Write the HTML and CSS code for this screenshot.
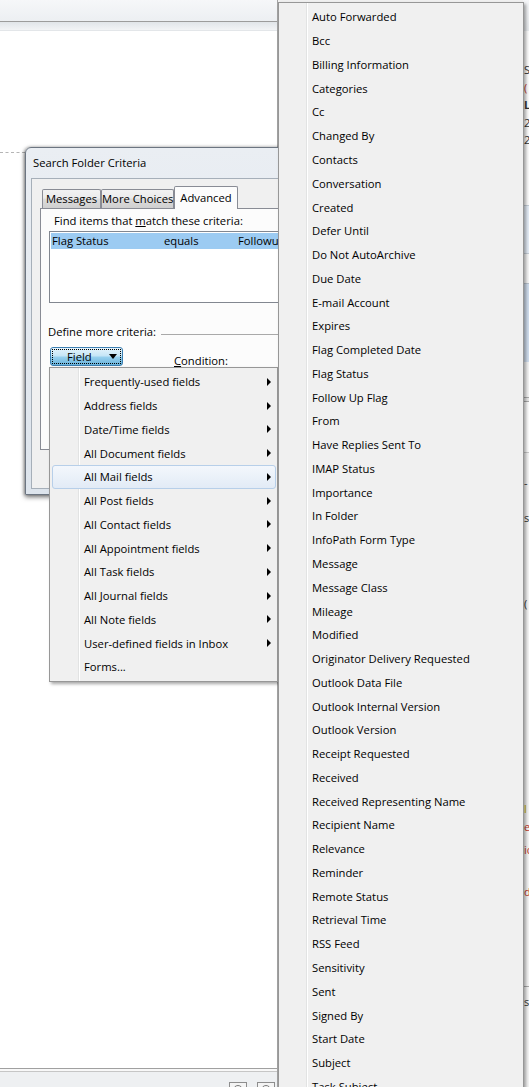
FILE: index.html
```html
<!DOCTYPE html>
<html>
<head>
<meta charset="utf-8">
<title>Search Folder Criteria</title>
<link rel="stylesheet" href="styles.css">
</head>
<body>
<div class="screen">
  <div class="app">
    <div class="toolbar"></div>
    <div class="strip"></div>
    <div class="content"><div class="dash"></div></div>
    <div class="status">
      <span class="sbtn"><i></i></span>
      <span class="sbtn"><i></i></span>
    </div>
  </div>
  <div class="behind">
    <div class="peek">
      <div class="pk-top"></div>
      <div class="pk-a">
        <div class="pk-line">Se</div>
        <div class="pk-line pk-red">(</div>
        <div class="pk-line pk-bold">L</div>
        <div class="pk-line">20</div>
        <div class="pk-line">27</div>
      </div>
      <div class="pk-b"></div>
      <div class="pk-c"></div>
      <div class="pk-d"></div>
      <div class="pk-e"></div>
      <div class="pk-f"></div>
      <div class="pk-g"></div>
      <div class="pk-h">
        <div class="pk-txt pk-t1">-</div>
        <div class="pk-txt pk-t2">s</div>
        <div class="pk-txt pk-t3">(</div>
        <div class="pk-txt pk-t4 pk-yel">l</div>
        <div class="pk-txt pk-t5 pk-red">e</div>
        <div class="pk-txt pk-t6 pk-red">ic</div>
        <div class="pk-txt pk-t7 pk-red">d</div>
        <div class="pk-rule"></div>
        <div class="pk-txt pk-t8">s</div>
      </div>
    </div>
  </div>

  <div class="dialog">
    <div class="dialog-title">Search Folder Criteria</div>
    <div class="client">
      <div class="tabs">
        <div class="tab tab-msg">Messages</div>
        <div class="tab tab-more">More Choices</div>
        <div class="tab tab-adv active">Advanced</div>
      </div>
      <div class="panel">
        <div class="find-label">Find items that <u>m</u>atch these criteria:</div>
        <div class="listbox">
          <div class="lrow">
            <span>Flag Status</span><span>equals</span><span>Followup</span>
          </div>
        </div>
        <div class="define">
          <span>Define more criteria:</span>
          <span class="define-line"></span>
        </div>
        <div class="field-row">
          <div class="field-btn">
            <div class="focus">
              <span>Field</span>
              <span class="drop"></span>
            </div>
          </div>
          <span class="cond"><u>C</u>ondition:</span>
        </div>
      </div>
    </div>
  </div>

  <div class="menu menu-left">
    <div class="mi">Frequently-used fields<span class="arrow"></span></div>
    <div class="mi">Address fields<span class="arrow"></span></div>
    <div class="mi">Date/Time fields<span class="arrow"></span></div>
    <div class="mi">All Document fields<span class="arrow"></span></div>
    <div class="mi hot">All Mail fields<span class="arrow"></span></div>
    <div class="mi">All Post fields<span class="arrow"></span></div>
    <div class="mi">All Contact fields<span class="arrow"></span></div>
    <div class="mi">All Appointment fields<span class="arrow"></span></div>
    <div class="mi">All Task fields<span class="arrow"></span></div>
    <div class="mi">All Journal fields<span class="arrow"></span></div>
    <div class="mi">All Note fields<span class="arrow"></span></div>
    <div class="mi">User-defined fields in Inbox<span class="arrow"></span></div>
    <div class="mi">Forms...</div>
  </div>

  <div class="menu menu-right">
    <div class="mi">Auto Forwarded</div>
    <div class="mi">Bcc</div>
    <div class="mi">Billing Information</div>
    <div class="mi">Categories</div>
    <div class="mi">Cc</div>
    <div class="mi">Changed By</div>
    <div class="mi">Contacts</div>
    <div class="mi">Conversation</div>
    <div class="mi">Created</div>
    <div class="mi">Defer Until</div>
    <div class="mi">Do Not AutoArchive</div>
    <div class="mi">Due Date</div>
    <div class="mi">E-mail Account</div>
    <div class="mi">Expires</div>
    <div class="mi">Flag Completed Date</div>
    <div class="mi">Flag Status</div>
    <div class="mi">Follow Up Flag</div>
    <div class="mi">From</div>
    <div class="mi">Have Replies Sent To</div>
    <div class="mi">IMAP Status</div>
    <div class="mi">Importance</div>
    <div class="mi">In Folder</div>
    <div class="mi">InfoPath Form Type</div>
    <div class="mi">Message</div>
    <div class="mi">Message Class</div>
    <div class="mi">Mileage</div>
    <div class="mi">Modified</div>
    <div class="mi">Originator Delivery Requested</div>
    <div class="mi">Outlook Data File</div>
    <div class="mi">Outlook Internal Version</div>
    <div class="mi">Outlook Version</div>
    <div class="mi">Receipt Requested</div>
    <div class="mi">Received</div>
    <div class="mi">Received Representing Name</div>
    <div class="mi">Recipient Name</div>
    <div class="mi">Relevance</div>
    <div class="mi">Reminder</div>
    <div class="mi">Remote Status</div>
    <div class="mi">Retrieval Time</div>
    <div class="mi">RSS Feed</div>
    <div class="mi">Sensitivity</div>
    <div class="mi">Sent</div>
    <div class="mi">Signed By</div>
    <div class="mi">Start Date</div>
    <div class="mi">Subject</div>
    <div class="mi">Task Subject</div>
  </div>
</div>
</body>
</html>
```

FILE: styles.css
```css
* { box-sizing: border-box; margin: 0; padding: 0; }
html, body { width: 529px; height: 1087px; overflow: hidden; }
body {
  font-family: "Open Sans", "Noto Sans", sans-serif;
  font-size: 11.25px;
  color: #000;
  background: #fff;
}
u { text-decoration: underline; text-underline-offset: 1px; }

.screen {
  position: relative;
  width: 529px;
  height: 1087px;
  overflow: hidden;
  display: flex;
}

/* ---------- background application ---------- */
.app {
  width: 278px;
  border-right: 1px solid #a3a3a3;
  display: flex;
  flex-direction: column;
  background: #fff;
}
.toolbar {
  height: 22px;
  background: linear-gradient(#f6f7f9, #eceff2);
  border-bottom: 1px solid #9c9c9c;
}
.strip {
  height: 9px;
  background: linear-gradient(#e1e5e9, #f2f4f6);
  border-bottom: 1px solid #e3e6e9;
}
.content { flex: 1; background: #fff; }
.dash {
  margin-top: 121px;
  width: 25px;
  border-top: 1px dashed #b5b5b5;
}
.status {
  height: 19px;
  border-top: 1px solid #a0a0a0;
  background: linear-gradient(#f8f8f8 0 2px, #c6c6c6 2px 3px, #eef0f2 3px);
  display: flex;
  gap: 10px;
  padding: 13px 0 0 229px;
}
.sbtn {
  width: 18px;
  height: 8px;
  border: 1px solid #8d8d8d;
  border-bottom: none;
  background: #f4f4f4;
  display: flex;
  justify-content: center;
  padding-top: 2px;
}
.sbtn i {
  width: 10px;
  height: 10px;
  border: 1px solid #7a7a7a;
  border-radius: 50%;
}

.behind {
  flex: 1;
  background: #f0f0f0;
  display: flex;
  justify-content: flex-end;
}
.peek {
  width: 6px;
  display: flex;
  flex-direction: column;
  font-size: 11px;
  line-height: 17.5px;
  color: #333;
  overflow: hidden;
  white-space: nowrap;
}
.pk-top { height: 31px; background: linear-gradient(#f5f6f8, #e6e9ec); flex: none; }
.pk-a { height: 174px; background: #fafafa; padding: 30px 0 0 1px; flex: none; }
.pk-red { color: #c0392b; }
.pk-yel { color: #c8b400; }
.pk-bold { font-weight: 700; }
.pk-b { height: 48px; background: #e3ebf5; border-top: 1px solid #c4ccd5; flex: none; }
.pk-c { height: 30px; background: #f4f4f4; border-top: 1px solid #c4ccd5; flex: none; }
.pk-d { height: 79px; background: #cfdcec; border-top: 1px solid #b8c2cc; flex: none; }
.pk-e { height: 35px; background: #f2f2f2; flex: none; }
.pk-f { height: 5px; border-top: 1px solid #a9a9a9; border-bottom: 1px solid #a9a9a9; background: #e8e8e8; flex: none; }
.pk-g { height: 51px; background: #fbfbfb; border-bottom: 1px solid #c9c9c9; flex: none; }
.pk-h { flex: 1; background: #f4f4f4; padding-left: 1px; }
.pk-txt { height: 17px; line-height: 17px; }
.pk-t1 { margin-top: 21px; }
.pk-t2 { margin-top: 18px; }
.pk-t3 { margin-top: 69px; }
.pk-t4 { margin-top: 188px; }
.pk-t5 { margin-top: 1px; }
.pk-t6 { margin-top: 6px; }
.pk-t7 { margin-top: 25px; }
.pk-rule { margin-top: 86px; border-top: 1px solid #a9a9a9; width: 6px; }
.pk-t8 { margin-top: 6px; }

/* ---------- dialog ---------- */
.dialog {
  position: absolute;
  left: 25px;
  top: 147px;
  width: 330px;
  height: 348px;
  border: 1px solid #6c7581;
  border-radius: 6px 6px 0 0;
  background: linear-gradient(#eaeef3, #dde4ec);
  box-shadow: 0 2px 5px rgba(0, 0, 0, 0.55), -1px 0 3px rgba(0, 0, 0, 0.25);
  display: flex;
  flex-direction: column;
}
.dialog-title {
  height: 30px;
  line-height: 30px;
  padding-left: 7px;
  white-space: nowrap;
}
.client {
  flex: 1;
  margin: 0 5px 5px;
  border: 1px solid #a6afb9;
  background: #f0f0f0;
  padding: 7px 0 0 8px;
}
.tabs {
  display: flex;
  align-items: flex-end;
  height: 22px;
  padding-left: 2px;
}
.tab {
  height: 19px;
  line-height: 18px;
  text-align: center;
  border: 1px solid #898c95;
  border-bottom: none;
  border-radius: 2px 2px 0 0;
  background: linear-gradient(#f2f2f2, #ebebeb 45%, #dcdcdc 50%, #cfcfcf);
  white-space: nowrap;
}
.tab-msg { width: 59px; }
.tab-more { width: 73px; }
.tab-adv { width: 64px; }
.tab.active {
  height: 23px;
  line-height: 22px;
  margin-bottom: -1px;
  background: #fcfcfc;
  position: relative;
  z-index: 1;
}
.panel {
  height: 242px;
  border: 1px solid #898c95;
  background: #fcfcfc;
  padding-top: 4px;
}
.find-label {
  margin-left: 13px;
  line-height: 16px;
  white-space: nowrap;
}
.listbox {
  margin: 2px 0 0 8px;
  height: 72px;
  border: 1px solid #828790;
  background: #fff;
  padding: 1px 0 0 1px;
}
.lrow {
  display: grid;
  grid-template-columns: 112px 74px auto;
  height: 16px;
  line-height: 16px;
  padding-left: 1px;
  background: #9ccbf2;
  white-space: nowrap;
}
.define {
  display: flex;
  margin: 21px 0 0 7px;
  line-height: 16px;
  white-space: nowrap;
}
.define-line {
  flex: 1;
  height: 1px;
  background: #a9a9a9;
  margin: 10px 0 0 5px;
}
.field-row {
  display: flex;
  margin: 7px 0 0 9px;
}
.field-btn {
  width: 73px;
  height: 19px;
  border: 1px solid #3c7fb1;
  border-radius: 3px;
  padding: 1px;
  background: linear-gradient(#e5f4fc 0%, #c4e5f6 48%, #98d1ef 52%, #68b3db 100%);
}
.focus {
  height: 100%;
  border: 1px dotted #000;
  display: flex;
  align-items: center;
  padding-left: 14px;
  line-height: 13px;
}
.drop {
  margin-left: auto;
  margin-right: 3px;
  width: 0;
  height: 0;
  border-top: 5px solid #000;
  border-left: 4.5px solid transparent;
  border-right: 4.5px solid transparent;
}
.cond {
  margin-left: 51px;
  align-self: flex-end;
  line-height: 16px;
  margin-bottom: -3px;
  white-space: nowrap;
}

/* ---------- popup menus ---------- */
.menu {
  position: absolute;
  border: 1px solid #979797;
  box-shadow: 2px 2px 3px rgba(0, 0, 0, 0.35);
  padding: 2px 1px 2px 2px;
}
.menu-left {
  left: 49px;
  top: 367px;
  width: 229px;
  background: linear-gradient(to right, #f0f0f0 28px, #e2e3e3 28px 29px, #fff 29px 30px, #f0f0f0 30px);
}
.menu-right {
  left: 278px;
  top: 2px;
  width: 246px;
  background: linear-gradient(to right, #f0f0f0 27px, #e2e3e3 27px 28px, #fff 28px 29px, #f0f0f0 29px);
}
.mi {
  display: flex;
  align-items: center;
  border: 1px solid transparent;
  border-radius: 3px;
  white-space: nowrap;
}
.menu-left .mi { height: 23.75px; padding-left: 31px; }
.menu-right .mi { height: 23.77px; padding-left: 30px; }
.mi.hot {
  background: linear-gradient(#f3f7fc, #e2ebf6);
  border-color: #b7cfe9;
}
.arrow {
  margin-left: auto;
  margin-right: 4px;
  width: 0;
  height: 0;
  border-left: 4px solid #000;
  border-top: 4px solid transparent;
  border-bottom: 4px solid transparent;
}
```
